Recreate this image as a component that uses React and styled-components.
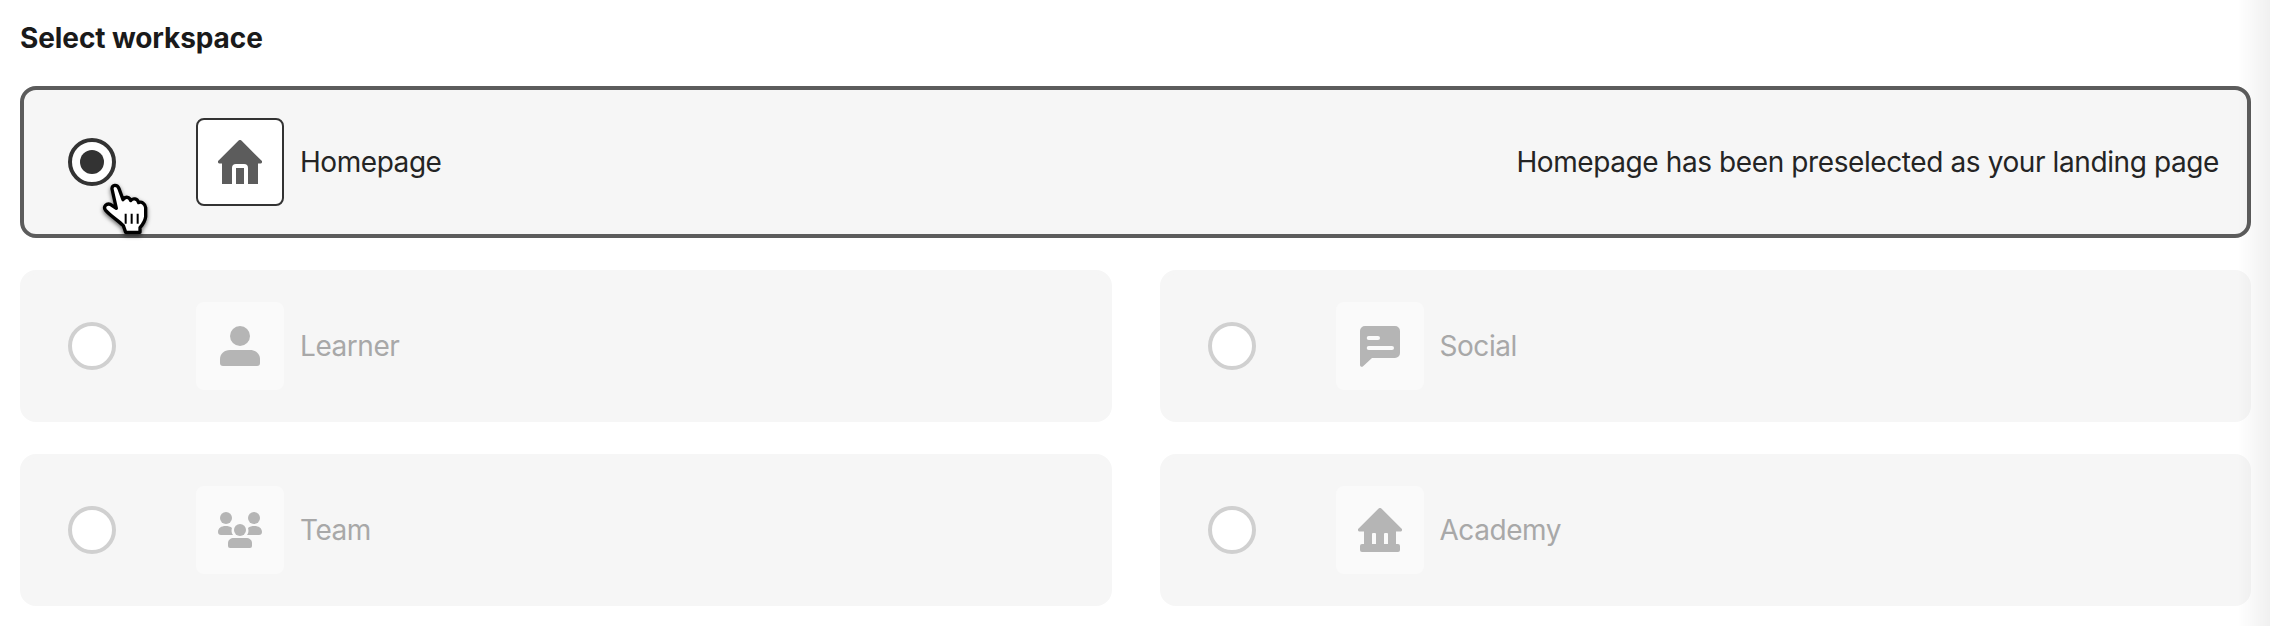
import styled, { createGlobalStyle } from 'styled-components';

const GlobalStyle = createGlobalStyle`
body {
    margin: 0;
    background: #ffffff;
    font-family: 'Inter', 'Liberation Sans', sans-serif;
    color: #242424;
}
`

//Styles
const Page = styled.div`
padding: 18px 19px 20px 20px;
`
const Heading = styled.h2`
margin: 0 0 28px;
font-size: 28px;
line-height: 40px;
font-weight: 700;
letter-spacing: -0.1px;
color: #1a1a1a;
`
const Options = styled.div`
display: grid;
grid-template-columns: 1fr 1fr;
column-gap: 48px;
row-gap: 32px;
`
const Card = styled.label`
grid-column: ${(p) => (p.$selected ? '1 / -1' : 'auto')};
display: flex;
align-items: center;
height: 152px;
box-sizing: border-box;
padding: 0 28px 0 44px;
background: #f6f6f6;
border: 4px solid ${(p) => (p.$selected ? '#5c5c5c' : '#f6f6f6')};
border-radius: 16px;
`
const Radio = styled.span`
position: relative;
flex: none;
width: 48px;
height: 48px;
box-sizing: border-box;
display: flex;
align-items: center;
justify-content: center;
margin-right: 80px;
background: #ffffff;
border: 4px solid ${(p) => (p.$selected ? '#333333' : '#d0d0d0')};
border-radius: 50%;
`
const Dot = styled.span`
width: 24px;
height: 24px;
background: #333333;
border-radius: 50%;
`
const IconBox = styled.span`
flex: none;
width: 88px;
height: 88px;
box-sizing: border-box;
display: flex;
align-items: center;
justify-content: center;
margin-right: 16px;
color: ${(p) => (p.$selected ? '#5c5c5c' : '#b5b5b5')};
background: ${(p) => (p.$selected ? '#ffffff' : '#fafafa')};
border: 2px solid ${(p) => (p.$selected ? '#333333' : '#fafafa')};
border-radius: 8px;
`
const Label = styled.span`
font-size: 28px;
line-height: 40px;
letter-spacing: -0.45px;
color: ${(p) => (p.$selected ? '#242424' : '#a8a8a8')};
`
const Note = styled.span`
margin-left: auto;
font-size: 28px;
line-height: 40px;
letter-spacing: -0.4px;
color: #242424;
`
const Pointer = styled.svg`
position: absolute;
left: 23px;
top: 33px;
width: 60px;
height: 65px;
filter: drop-shadow(0 2px 2px rgba(0, 0, 0, 0.6));
`
const EdgeShade = styled.div`
position: fixed;
top: 0;
right: 0;
bottom: 0;
width: 32px;
pointer-events: none;
background: linear-gradient(to right, rgba(0, 0, 0, 0), rgba(0, 0, 0, 0.06));
`

function HomeIcon() {
    return (
        <svg width="44" height="44" viewBox="0 0 44 44" fill="currentColor">
            <path d="M20.600 .6a2 2 0 0 1 2.800 0L43.400 20.600a1.600 1.600 0 0 1 -1.100 2.900H40V44H30V28a4 4 0 0 0 -4 -4H18a4 4 0 0 0 -4 4V44H4V23.500H1.700a1.600 1.600 0 0 1 -1.100 -2.900Z" />
            <path d="M18 28h8v16h-8z" />
        </svg>
    )
}

function PersonIcon() {
    return (
        <svg width="44" height="44" viewBox="0 0 44 44" fill="currentColor">
            <circle cx="22" cy="12" r="10" />
            <path d="M2 35C2 30 6 26 12 26H32C38 26 42 30 42 35V39A3 3 0 0 1 39 42H5A3 3 0 0 1 2 39Z" />
        </svg>
    )
}

function ChatIcon() {
    return (
        <svg width="44" height="44" viewBox="0 0 44 44" fill="currentColor">
            <path
                fillRule="evenodd"
                d="M7 2H37A5 5 0 0 1 42 7V29A5 5 0 0 1 37 34H14L4.800 42.500C3.600 43.300 2 42.600 2 41V7A5 5 0 0 1 7 2ZM10.700 12A2 2 0 0 0 10.700 16H20A2 2 0 0 0 20 12ZM10.700 22A2 2 0 0 0 10.700 26H34A2 2 0 0 0 34 22Z"
            />
        </svg>
    )
}

function TeamIcon() {
    return (
        <svg width="44" height="44" viewBox="0 0 44 44" fill="currentColor">
            <circle cx="8" cy="10" r="6" />
            <circle cx="36" cy="10" r="6" />
            <circle cx="22" cy="22" r="6" />
            <path d="M0 24C0 20 3.500 18 7.500 18C10 18 12.500 18.500 14 20C13.200 22.500 13.400 25 15 27H3C1.200 27 0 25.800 0 24Z" />
            <path d="M44 24C44 20 40.500 18 36.500 18C34 18 31.500 18.500 30 20C30.800 22.500 30.600 25 29 27H41C42.800 27 44 25.800 44 24Z" />
            <path d="M10 35C10 32 12.500 30 16 30H28C31.500 30 34 32 34 35V38A2 2 0 0 1 32 40H12A2 2 0 0 1 10 38Z" />
        </svg>
    )
}

function AcademyIcon() {
    return (
        <svg width="44" height="44" viewBox="0 0 44 44" fill="currentColor">
            <path d="M20.600 .6a2 2 0 0 1 2.800 0L43.400 20.600a1.600 1.600 0 0 1 -1.100 2.900H38V36H30V26a1 1 0 0 0 -1 -1H27a1 1 0 0 0 -1 1V36H18V26a1 1 0 0 0 -1 -1H15a1 1 0 0 0 -1 1V36H6V23.500H1.700a1.600 1.600 0 0 1 -1.100 -2.900Z" />
            <path d="M4 36H40A2 2 0 0 1 42 38V42A2 2 0 0 1 40 44H4A2 2 0 0 1 2 42V38A2 2 0 0 1 4 36Z" />
        </svg>
    )
}

function HandCursor() {
    return (
        <Pointer viewBox="0 0 180 195">
            <path
                d="M51 42C50 28 67 27 72 41L84 74C92 62 104 66 107 77C113 68 127 70 131 83C139 78 151 86 152 98L152 125C150 140 142 150 135 158L135 172L92 172L85 152C70 136 50 126 32 106C23 95 35 84 46 88L64 100Z"
                fill="#ffffff"
                stroke="#000000"
                strokeWidth="10"
                strokeLinejoin="round"
            />
            <path d="M92 116V146M110 116V146M128 116V146" stroke="#000000" strokeWidth="6" fill="none" />
        </Pointer>
    )
}

const workspaces = [
    { name: 'Learner', icon: <PersonIcon /> },
    { name: 'Social', icon: <ChatIcon /> },
    { name: 'Team', icon: <TeamIcon /> },
    { name: 'Academy', icon: <AcademyIcon /> },
]

export default function App() {
    return (
        <Page>
            <GlobalStyle />
            <Heading>Select workspace</Heading>
            <Options>
                <Card $selected>
                    <Radio $selected>
                        <Dot />
                        <HandCursor />
                    </Radio>
                    <IconBox $selected>
                        <HomeIcon />
                    </IconBox>
                    <Label $selected>Homepage</Label>
                    <Note>Homepage has been preselected as your landing page</Note>
                </Card>
                {workspaces.map((item) => (
                    <Card key={item.name}>
                        <Radio />
                        <IconBox>{item.icon}</IconBox>
                        <Label>{item.name}</Label>
                    </Card>
                ))}
            </Options>
            <EdgeShade />
        </Page>
    )
}
